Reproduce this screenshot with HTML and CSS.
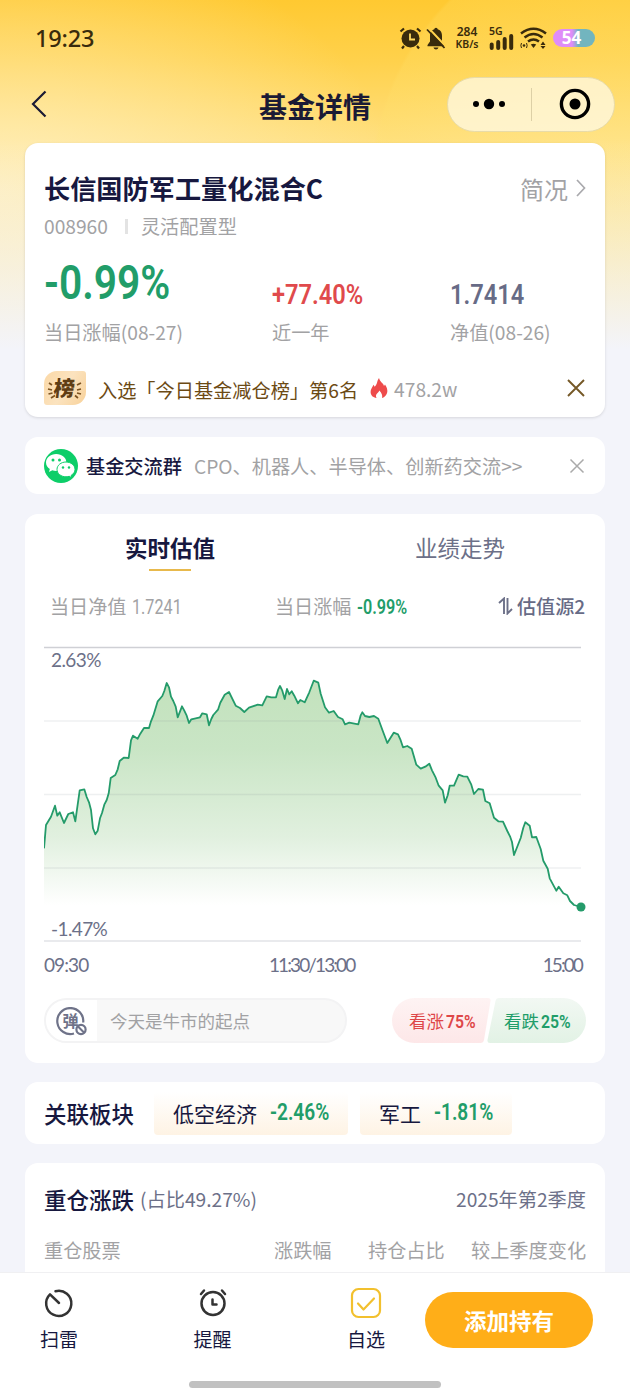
FILE: index.html
```html
<!DOCTYPE html>
<html lang="zh-CN">
<head>
    <meta charset="UTF-8">
    <meta name="viewport" content="width=device-width, initial-scale=1.0">
    <title>基金详情</title>
    <link rel="stylesheet" href="styles.css">
</head>
<body>
<div class="page">
    <!-- 状态栏 -->
    <div class="status">
        <span class="time">19:23</span>
        <div class="status-icons">
            <svg width="23" height="23" viewBox="0 0 23 23">
                <circle cx="11.5" cy="11.5" r="9" fill="#392b0c"/>
                <path d="M1.5 4.5L5 1.500M21.500 4.500L18 1.500M5 19l-2 2.500M18 19l2 2.500" stroke="#392b0c" stroke-width="2.200" fill="none"/>
                <path d="M11 6.500v6h5" stroke="#ffd95e" stroke-width="1.800" fill="none"/>
            </svg>
            <svg class="bell" width="20" height="23" viewBox="0 0 20 23">
                <path d="M10 .8c-1 0-1.600.8-1.700 1.500C5 3.300 4 6 4 9v5.500L1.500 18v1.300h17V18L16 14.500V9c0-3-1-5.700-4.300-6.700C11.600 1.600 11 .8 10 .8zM7.500 20.500h5c-.4 1.300-1.300 1.900-2.500 1.900s-2.100-.6-2.500-1.900z" fill="#392b0c"/>
                <path d="M2.500 1L19.500 19" stroke="#ffd24c" stroke-width="2"/>
                <path d="M1 2.500L18.500 21" stroke="#392b0c" stroke-width="1.800"/>
            </svg>
            <div class="speed"><span>284</span><span>KB/s</span></div>
            <div class="signal">
                <span>5G</span>
                <svg width="25" height="16" viewBox="0 0 25 16">
                    <path d="M2.700 10.500v3.500M9.200 8v6M15.700 5v9M22.200 2v12" stroke="#392b0c" stroke-width="4" stroke-linecap="round"/>
                </svg>
            </div>
            <svg class="wifi" width="27" height="22" viewBox="0 0 27 22">
                <g fill="none" stroke="#392b0c" stroke-width="2.500">
                    <path d="M1 6.500Q13.500-3 26 6.500"/>
                    <path d="M4.500 10.500Q13.500 3.500 22.500 10.500"/>
                    <path d="M8 14.500Q13.500 10.500 19 14.500"/>
                </g>
                <path d="M10.800 17.500Q13.500 16 16.200 17.500L13.500 21zM20.500 18l2.500-3.500 2.500 3.500zM20.500 19h5L23 22z" fill="#392b0c"/>
                <circle cx="4" cy="18.500" r="1.300" fill="#392b0c"/>
                <path d="M1.500 16q-1.300 2.500 0 5M6.500 16q1.300 2.500 0 5" stroke="#392b0c" stroke-width="1" fill="none"/>
            </svg>
            <span class="battery">54</span>
        </div>
    </div>

    <!-- 导航栏 -->
    <div class="nav">
        <svg class="back" width="16" height="28" viewBox="0 0 16 28">
            <path d="M14.500 1.500L2 14l12.500 12.500" fill="none" stroke="#1b1a35" stroke-width="2.200"/>
        </svg>
        <h1>基金详情</h1>
        <div class="capsule">
            <svg width="36" height="12" viewBox="0 0 36 12">
                <circle cx="5" cy="6" r="3"/><circle cx="18" cy="6" r="5.200"/><circle cx="31" cy="6" r="3"/>
            </svg>
            <i></i>
            <svg width="32" height="32" viewBox="0 0 32 32">
                <circle cx="16" cy="16" r="13.600" fill="none" stroke="#000" stroke-width="3.400"/><circle cx="16" cy="16" r="5.500"/>
            </svg>
        </div>
    </div>

    <!-- 基金概要 -->
    <div class="card fund">
        <div class="fund-title">
            <h2>长信国防军工量化混合C</h2>
            <a>简况
                <svg width="10" height="18" viewBox="0 0 10 18"><path d="M1 1l7.500 8L1 17" fill="none" stroke="#a9a9ad" stroke-width="1.700"/></svg>
            </a>
        </div>
        <div class="fund-code"><span>008960</span><i></i><span>灵活配置型</span></div>
        <div class="fund-data">
            <div><b class="num big green">-0.99%</b><span>当日涨幅(08-27)</span></div>
            <div><b class="num red">+77.40%</b><span>近一年</span></div>
            <div><b class="num gray">1.7414</b><span>净值(08-26)</span></div>
        </div>
        <div class="rank">
            <div class="rank-icon">
                <svg width="42" height="34" viewBox="0 0 42 34">
                    <path d="M4 18l4 1M4.500 23l4-1M7 27l4-2.500M5 12l3 2M37 18l-4 1M37 23l-4-1M34 27l-3-2.500M37 12l-4 2" stroke="#7c5220" stroke-width="1.700"/>
                </svg>
                <b>榜</b>
            </div>
            <span class="rank-text">入选「今日基金减仓榜」第6名</span>
            <svg class="fire" width="18" height="20" viewBox="0 0 18 20">
                <path d="M9 0c.8 4 4.500 5 5 8l1-1.500c1.800 2.500 2.600 5 2.300 7.500-.4 3-2.600 5.200-5.300 6 .8-2.800-.4-5-2.700-7.500-.4 2-2.500 2.600-3.100 4.300-.4 1.200-.2 2.300.4 3.200C3 19.500.7 17.500.6 14 .5 11 2.500 9 3.500 6.700l1.200 2C7.500 6.500 6.700 3 9 0z" fill="#ee4b4b"/>
            </svg>
            <span class="hot">478.2w</span>
            <svg class="close" width="20" height="20" viewBox="0 0 20 20"><path d="M2 2l16 16M18 2L2 18" stroke="#755827" stroke-width="1.900"/></svg>
        </div>
    </div>

    <!-- 交流群 -->
    <div class="card group">
        <svg width="34" height="34" viewBox="0 0 34 34">
            <circle cx="17" cy="17" r="17" fill="#0dce69"/>
            <path d="M12.200 5C6.500 5 2 8.800 2 13.500c0 2.700 1.500 5 3.800 6.600L5 23l3.300-1.700c1.200.4 2.500.6 3.900.6 5.700 0 10.200-3.800 10.200-8.500S17.900 5 12.200 5z" fill="#fff"/>
            <path d="M22 13c-5 0-9 3.300-9 7.400s4 7.400 9 7.400c1.100 0 2.200-.2 3.200-.5l2.700 1.400-.7-2.400c2.300-1.300 3.800-3.500 3.800-5.900 0-4.100-4-7.400-9-7.400z" fill="#fff" stroke="#0dce69"/>
            <g fill="#0dce69"><circle cx="9" cy="11" r="1.500"/><circle cx="15.500" cy="11" r="1.500"/><circle cx="19" cy="18.500" r="1.200"/><circle cx="25" cy="18.500" r="1.200"/></g>
        </svg>
        <b>基金交流群</b>
        <span>CPO、机器人、半导体、创新药交流&gt;&gt;</span>
        <svg class="close" width="16" height="16" viewBox="0 0 16 16"><path d="M1.500 1.500l13 13M14.500 1.500l-13 13" stroke="#aaa" stroke-width="1.500"/></svg>
    </div>

    <!-- 实时估值 -->
    <div class="card chart-card">
        <div class="tabs">
            <div class="tab active">实时估值</div>
            <div class="tab">业绩走势</div>
        </div>
        <div class="info">
            <div>当日净值 <b class="num light">1.7241</b></div>
            <div>当日涨幅 <b class="num green">-0.99%</b></div>
            <div class="source">
                <svg width="15" height="18" viewBox="0 0 15 18"><path d="M1 6L6 1.500V17M9.500 1v15.500L14 12" fill="none" stroke="#6c7088" stroke-width="1.900"/></svg>
                估值源2
            </div>
        </div>
        <div class="chart">
            <svg width="545" height="296" viewBox="0 -1 545 296">
                <defs>
                    <linearGradient id="area" x1="0" y1="34" x2="0" y2="258" gradientUnits="userSpaceOnUse">
                        <stop offset="0" stop-color="#c3e2bd"/>
                        <stop offset=".3" stop-color="#c9e5c5"/>
                        <stop offset=".7" stop-color="#e1f0df"/>
                        <stop offset="1" stop-color="#fff"/>
                    </linearGradient>
                </defs>
                <polygon fill="url(#area)" points="0,260 0,201 2,178 7,170 11,159 13.300,169 15.700,165 20,176 24.300,167 29,165 31.300,174 35.700,143 40.300,142 42.700,150 45,155 47,163 49,181 51.300,187 53.700,184 56,171 58,166 60.300,158 62.700,153 64.700,146 66.700,131 71.300,128 73.700,122 75.700,114 79.700,111 84.700,111 87,93 89,89 93.700,92 96.300,87 100,81 105,81 107,74 109.300,69 113.700,54 118.300,49 120.300,44 122.700,36 125,40 127,50 129.300,54 131.700,60 133.700,70 138,59 140.300,64 142.700,69 145,76 147.300,72 156,70 158.300,66 162.700,67 165,78 167.300,72 169.300,68 174,63 176.300,56 180.700,48 185,45 191.700,59 196,61 200.300,65 205,61 213.700,58 218.300,58 222.700,49 227.300,50 232,50 234.300,42 236,39 238.300,44 240.700,52 243,42 245.300,47 247.700,44 250.300,49 254,56 256.300,53 260.700,55 265.300,45 269.700,34 274.300,36 276.700,47 281,60 285,66 289.700,64 294,70 298.700,72 301,77 305.300,76 314.300,77 316.700,68 318.300,65 321,69 325.300,70 330,69 334.300,72 338.700,84 343.300,96 349.700,86 354,87 356.300,92 359,100 363.300,99 367.700,102 372.300,118 376.700,122 381.300,120 385.300,117 388,123 391.700,131 394.700,139 398.700,143 401,156 403.700,148 405.700,139 410,139 414.700,128 419.300,129 423.300,130 427.300,138 430,147 434.300,142 439,143 441.300,154 445.700,156 450,171 454.300,174 459,175 463.300,184 466,189 468,195 470,208 476.700,191 479.300,181 481.300,175 485.700,179 488,190 492.300,190 496.700,202 499.300,214 503.700,222 505.700,231 512.300,244 514.700,240 519.300,246 523.300,248 526,254 530,258 537,260"/>
                <g stroke="#7a8a96" stroke-opacity=".13" stroke-width="1.500">
                    <path d="M0 74h537M0 147.500h537M0 221h537"/>
                </g>
                <path d="M0 .5h537" stroke="#cfd0d5" stroke-width="1.700"/>
                <path d="M0 294h537" stroke="#e2e3e7" stroke-width="1.700"/>
                <polyline fill="none" stroke="#249b6a" stroke-width="1.800" stroke-linejoin="round" points="0,201.300 2,178 7,169.700 11,158.700 13.300,168.700 15.700,165.300 20,176 24.300,167 29,165.300 31.300,174.300 35.700,143.300 40.300,142.300 42.700,150 45,155.300 47,163 49,181.300 51.300,187.300 53.700,183.700 56,171.300 58,166 60.300,157.700 62.700,153 64.700,146.300 66.700,131 71.300,128 73.700,122.300 75.700,114 79.700,110.700 84.700,111 87,93.300 89,88.700 93.700,91.700 96.300,86.700 100,81 105,81 107,74.300 109.300,68.700 113.700,54.300 118.300,49 120.300,44 122.700,36 125,40.300 127,49.700 129.300,54 131.700,59.700 133.700,70.300 138,59.300 140.300,63.700 142.700,68.700 145,76 147.300,72.300 156,70.300 158.300,66.300 162.700,67.300 165,78.300 167.300,72 169.300,68 174,62.700 176.300,55.700 180.700,47.700 185,45 191.700,58.700 196,61 200.300,65 205,60.700 213.700,57.700 218.300,58.300 222.700,49.300 227.300,50.300 232,50.300 234.300,42.300 236,39 238.300,43.700 240.700,52 243,42 245.300,47.300 247.700,44.300 250.300,48.700 254,56.300 256.300,53 260.700,55.300 265.300,45.300 269.700,33.700 274.300,35.700 276.700,46.700 281,60.300 285,65.700 289.700,64 294,70 298.700,72.300 301,77.300 305.300,75.700 314.300,77.300 316.700,68.300 318.300,65.300 321,69 325.300,70 330,69 334.300,71.700 338.700,83.700 343.300,96 349.700,85.700 354,87.300 356.300,92.300 359,100.300 363.300,99 367.700,101.700 372.300,117.700 376.700,121.700 381.300,119.700 385.300,116.700 388,123.300 391.700,130.700 394.700,138.700 398.700,143.300 401,155.700 403.700,148.300 405.700,138.700 410,138.700 414.700,127.700 419.300,129.300 423.300,129.700 427.300,137.700 430,147 434.300,142 439,142.700 441.300,154 445.700,156.300 450,170.700 454.300,174.300 459,174.700 463.300,184 466,189.300 468,195 470,208 476.700,191 479.300,180.700 481.300,175.300 485.700,178.700 488,190.300 492.300,190 496.700,202 499.300,213.700 503.700,221.700 505.700,231.300 512.300,243.700 514.700,239.700 519.300,246.300 523.300,248.300 526,254 530,258 537,260"/>
                <circle cx="537" cy="260" r="4.500" fill="#249b6a"/>
            </svg>
            <span class="max">2.63%</span>
            <span class="min">-1.47%</span>
        </div>
        <div class="axis"><span>09:30</span><span class="narrow">11:30/13:00</span><span class="narrow">15:00</span></div>
        <div class="talk">
            <div class="danmu">
                <div class="danmu-icon">
                    <svg width="31" height="29" viewBox="0 0 31 29">
                        <path d="M27.200 15.500A13 13 0 1 0 18 26.500" fill="none" stroke="#6f7389" stroke-width="2.200"/>
                        <circle cx="25" cy="22.500" r="4.600" fill="none" stroke="#6f7389" stroke-width="2.200"/>
                        <path d="M21.800 19.300l6.400 6.400" stroke="#6f7389" stroke-width="2"/>
                        <text class="danmu-char" x="6.500" y="19.500">弹</text>
                    </svg>
                </div>
                <span>今天是牛市的起点</span>
            </div>
            <div class="vote">
                <svg width="194" height="45" viewBox="0 0 194 45">
                    <defs>
                        <linearGradient id="up" x1="0" y1="0" x2="0" y2="1"><stop offset="0" stop-color="#fef3f3"/><stop offset="1" stop-color="#fde7e8"/></linearGradient>
                        <linearGradient id="down" x1="0" y1="0" x2="0" y2="1"><stop offset="0" stop-color="#f2f8f3"/><stop offset="1" stop-color="#e2f2e5"/></linearGradient>
                    </defs>
                    <path d="M22.500 0H96q3 0 2.500 3L92 42q-.6 3-3.500 3h-66a22.500 22.500 0 0 1 0-45z" fill="url(#up)"/>
                    <path d="M107 0h64.500a22.500 22.500 0 0 1 0 45H98q-3 0-2.500-3l8-39q.6-3 3.500-3z" fill="url(#down)"/>
                </svg>
                <span class="up">看涨<b class="num">75%</b></span>
                <span class="down">看跌<b class="num">25%</b></span>
            </div>
        </div>
    </div>

    <!-- 关联板块 -->
    <div class="card sector">
        <h3>关联板块</h3>
        <div class="tag tag1"><span>低空经济</span><b class="num green">-2.46%</b></div>
        <div class="tag tag2"><span>军工</span><b class="num green">-1.81%</b></div>
    </div>

    <!-- 重仓 -->
    <div class="card hold">
        <div class="hold-title">
            <h3>重仓涨跌</h3><span>(占比49.27%)</span><span class="season">2025年第2季度</span>
        </div>
        <div class="hold-head"><span>重仓股票</span><span>涨跌幅</span><span>持仓占比</span><span>较上季度变化</span></div>
    </div>

    <!-- 底部 -->
    <div class="footer">
        <div class="menu">
            <div class="menu-item">
                <svg width="32" height="32" viewBox="0 0 32 32"><path d="M12.500 4.200A12.600 12.600 0 1 1 7 7.300L16 16" fill="none" stroke="#333" stroke-width="2.500" stroke-linecap="round" stroke-linejoin="round"/></svg>
                <span>扫雷</span>
            </div>
            <div class="menu-item">
                <svg width="32" height="32" viewBox="0 0 32 32" fill="none" stroke="#333" stroke-width="2.500" stroke-linecap="round" stroke-linejoin="round"><circle cx="17" cy="16.500" r="11.500"/><path d="M16.500 12.500v5h4M5 7l3-3.500M29 7l-3-3.500"/></svg>
                <span>提醒</span>
            </div>
            <div class="menu-item">
                <svg width="32" height="32" viewBox="0 0 32 32" fill="none" stroke="#f2c02e" stroke-width="2.200" stroke-linecap="round" stroke-linejoin="round"><rect x="2" y="2" width="28" height="28" rx="6.500"/><path d="M8 16.500l5.500 6L24 11.500"/></svg>
                <span>自选</span>
            </div>
        </div>
        <button class="add">添加持有</button>
        <div class="homebar"></div>
    </div>
</div>
</body>
</html>
```
FILE: styles.css
```css
*{
    margin: 0;
    padding: 0;
    box-sizing: border-box;
}
body{
    width: 630px;
    height: 1400px;
    overflow: hidden;
    font-family: "Noto Sans CJK SC", sans-serif;
    color: #17183f;
    background: #f3f4fa;
}
svg{
    display: block;
    flex-shrink: 0;
}
span,b,a,h1,h2,h3{
    white-space: nowrap;
}
.page{
    height: 1400px;
    display: flex;
    flex-direction: column;
    /* 顶部黄色渐变 */
    background:
        linear-gradient(to bottom, rgba(243,244,250,0) 140px, #f3f4fa 350px),
        radial-gradient(circle at 640px 190px, rgba(255,238,160,.3) 0, rgba(255,226,110,.22) 267px, rgba(255,226,110,0) 270px),
        radial-gradient(ellipse 400px 260px at 0 190px, rgba(255,243,205,.7) 0, rgba(255,243,205,0) 100%),
        linear-gradient(to bottom, #ffc931 0, #ffd14b 60px, #ffe081 145px, #ffe38a 240px, #ffe79c 350px);
    background-color: #f3f4fa;
}
/* 数字字体 */
.num{
    display: inline-block;
    font-family: Roboto, sans-serif;
    font-weight: 600;
    transform: scaleX(.83);
    transform-origin: left center;
}
.green{ color: #219d69; }
.red{ color: #e04a4c; }
.gray{ color: #676b86; }

.status{
    height: 76px;
    flex-shrink: 0;
    padding: 0 35px;
    display: flex;
    align-items: center;
    justify-content: space-between;
    color: #392b0c;
    font-family: "Noto Sans", sans-serif;
}
.time{
    font-size: 23.5px;
    font-weight: 500;
    letter-spacing: -.2px;
}
.status-icons{
    display: flex;
    align-items: center;
}
.bell{ margin-left: 4px; }
.speed{
    width: 26px;
    margin-left: 8px;
    display: flex;
    flex-direction: column;
    align-items: center;
    font-size: 12px;
    line-height: 12px;
    font-weight: 600;
}
.speed span:last-child{
    font-size: 10.5px;
    line-height: 13px;
}
.signal{
    margin-left: 9px;
    display: flex;
    flex-direction: column;
    font-size: 10.5px;
    line-height: 9px;
    font-weight: 600;
}
.signal svg{ margin-top: -2px; }
.wifi{ margin-left: 6px; }
.battery{
    width: 42px;
    height: 18px;
    margin-left: 6px;
    padding-right: 5px;
    border-radius: 9px;
    background: linear-gradient(to right, #df8cf8 0, #df8cf8 45%, #72b5bf 60%);
    color: #fff;
    font-size: 17px;
    line-height: 18px;
    font-weight: 700;
    text-align: center;
}

.nav{
    height: 67px;
    flex-shrink: 0;
    display: grid;
    grid-template-columns: 183px 1fr 183px;
    align-items: center;
    padding-bottom: 11px;
}
.back{ margin-left: 31px; }
.nav h1{
    font-size: 28px;
    line-height: 40px;
    font-weight: 700;
    text-align: center;
    color: #1b1a35;
    padding-top: 3px;
}
.capsule{
    width: 168px;
    height: 55px;
    border: 1px solid #e8dba8;
    border-radius: 28px;
    background: rgba(255,250,230,.75);
    display: flex;
    align-items: center;
    padding: 0 23px;
}
.capsule i{
    width: 1px;
    height: 33px;
    margin: 0 27px 0 24px;
    background: #ddd0a6;
}

.card{
    width: 580.5px;
    margin: 0 auto 19px 24.5px;
    padding: 0 19px 0 19.5px;
    border-radius: 13px;
    background: #fff;
    flex-shrink: 0;
}
.fund{
    height: 274px;
    padding-top: 22px;
    box-shadow: 0 1px 3px rgba(0,0,0,.12);
    margin-bottom: 20px;
}
.fund-title{
    height: 46px;
    display: flex;
    align-items: center;
    justify-content: space-between;
}
.fund-title h2{
    font-size: 26.2px;
    font-weight: 700;
}
.fund-title a{
    display: flex;
    align-items: center;
    gap: 8px;
    font-size: 24px;
    color: #a2a2a5;
}
.fund-code{
    height: 30px;
    display: flex;
    align-items: center;
    font-size: 19.2px;
    color: #a2a2a4;
}
.fund-code i{
    width: 3px;
    height: 15px;
    margin: 0 13px 0 17px;
    background: #e3e3e3;
}
.fund-data{
    height: 112px;
    display: grid;
    grid-template-columns: 228px 178px 1fr;
}
.fund-data div{
    display: flex;
    flex-direction: column;
    justify-content: flex-end;
}
.fund-data span{
    font-size: 19.2px;
    line-height: 28px;
    margin-bottom: 7px;
    color: #a2a2a4;
}
.fund-data .num{
    font-size: 28.5px;
    line-height: 34px;
    margin-bottom: 6px;
}
.fund-data .big{
    font-size: 49px;
    line-height: 56px;
    margin-bottom: 7px;
}
.rank{
    height: 52px;
    margin-top: 9px;
    display: flex;
    align-items: center;
    font-size: 19.2px;
}
.rank-icon{
    width: 42px;
    height: 34px;
    border-radius: 13px 3px 13px 3px;
    background: linear-gradient(120deg, #fbd8a6, #fbe3bf 50%, #f8d199);
    position: relative;
}
.rank-icon b{
    position: absolute;
    left: 10px;
    top: 4px;
    font-size: 21px;
    line-height: 25px;
    font-weight: 900;
    color: #5f3d14;
    transform: skewX(-6deg);
}
.rank-text{
    margin-left: 12px;
    padding-top: 3px;
    color: #6c4a14;
}
.fire{ margin-left: 12px; }
.hot{
    margin-left: 6px;
    padding-top: 1px;
    color: #a2a2a4;
}
.close{ margin-left: auto; }

.group{
    height: 57px;
    display: flex;
    align-items: center;
    font-size: 19.2px;
    margin-bottom: 20px;
}
.group b{
    margin-left: 8px;
    font-weight: 500;
}
.group span{
    margin-left: 12px;
    color: #a2a2a4;
}
.group .close{ margin-right: 1px; }

.chart-card{
    height: 549px;
}
.tabs{
    height: 66px;
    display: grid;
    grid-template-columns: 252px 1fr;
    padding-top: 13px;
}
.tab{
    display: flex;
    flex-direction: column;
    align-items: center;
    font-size: 22.5px;
    line-height: 40px;
    color: #6c7088;
    padding-left: 38px;
}
.tab.active{
    padding-left: 0;
    font-weight: 700;
    color: #17183f;
}
.tab.active::after{
    content: "";
    width: 42px;
    height: 2px;
    margin-top: 2px;
    background: #e8b94c;
}
.info{
    height: 56px;
    padding-left: 6px;
    padding-bottom: 5px;
    display: grid;
    grid-template-columns: 225px 222px 1fr;
    align-items: center;
    font-size: 19.1px;
    color: #a2a2a4;
    white-space: nowrap;
}
.info .num{
    font-size: 19.500px;
    margin-left: 1px;
}
.info .light{ font-weight: 400; }
.source{
    display: flex;
    align-items: center;
    gap: 4px;
    margin-left: 1px;
    font-weight: 500;
    color: #676b86;
}
.chart{
    height: 296px;
    margin-top: 10px;
    position: relative;
    font-family: Lato, sans-serif;
    font-size: 19px;
    color: #6c7088;
}
.max,.min{
    position: absolute;
    left: 7px;
    line-height: 24px;
    letter-spacing: -.6px;
}
.max{ top: 2px; }
.min{ bottom: 1px; }
.axis{
    height: 44px;
    margin-right: 4px;
    display: grid;
    grid-template-columns: 225px 1fr auto;
    align-items: center;
    font-family: Lato, sans-serif;
    font-size: 19px;
    letter-spacing: -.9px;
    color: #6c7088;
}
.narrow{ letter-spacing: -1.900px; }
.talk{
    height: 45px;
    margin-top: 12px;
    display: flex;
    justify-content: space-between;
}
.danmu{
    width: 303px;
    height: 45px;
    border: 2px solid #f3f3f4;
    border-radius: 23px;
    background: #f8f8f8;
    overflow: hidden;
    display: flex;
    align-items: center;
    font-size: 17.500px;
    color: #a2a2a4;
}
.danmu-icon{
    width: 51px;
    height: 41px;
    padding: 7px 0 0 10px;
    margin-right: 13px;
    background: #fff;
}
.danmu-char{
    font-size: 16px;
    font-weight: 700;
    fill: #6f7389;
}
.vote{
    position: relative;
    font-size: 17.500px;
}
.vote span{
    position: absolute;
    top: 0;
    line-height: 45px;
}
.vote .num{
    font-size: 19px;
    margin-left: 2px;
}
.vote .up{ left: 17px; color: #de4648; }
.vote .down{ left: 112px; color: #219d69; }

.sector{
    height: 62px;
    display: flex;
    align-items: center;
}
.sector h3,.hold h3{
    font-size: 22.500px;
    font-weight: 500;
}
.tag{
    height: 43px;
    margin-top: 1px;
    border-radius: 4px;
    background: linear-gradient(to bottom, #fff 0, #fef3e4 100%);
    display: flex;
    align-items: center;
    font-size: 21px;
    line-height: 40px;
    padding: 0 0 2px 19px;
}
.tag1{ width: 194px; margin-left: 20px; }
.tag2{ width: 152px; margin-left: 12px; }
.tag .num{
    font-size: 23px;
    margin-left: 13px;
}

.hold{
    height: 237px;
    padding-top: 16px;
}
.hold-title{
    height: 40px;
    display: flex;
    align-items: center;
    font-size: 19.200px;
    font-weight: 400;
    color: #6c7088;
}
.hold-title h3{
    color: #17183f;
    margin-right: 6px;
}
.season{ margin-left: auto; }
.hold-head{
    height: 62px;
    display: grid;
    grid-template-columns: 230px 94px 103px 1fr;
    align-items: center;
    font-size: 19.200px;
    color: #a2a2a4;
}

.footer{
    position: fixed;
    left: 0;
    top: 1272px;
    width: 630px;
    height: 128px;
    border-top: 1px solid #f0f0f2;
    background: #fff;
    display: grid;
    grid-template-columns: 425px 168px;
    grid-template-rows: 108px 8px;
}
.menu{
    display: flex;
    justify-content: space-between;
    padding: 14px 40px 0 40px;
}
.menu-item{
    display: flex;
    flex-direction: column;
    align-items: center;
    font-size: 19px;
    line-height: 28px;
}
.menu-item span{ margin-top: 6px; }
.add{
    height: 56px;
    margin-top: 19px;
    border: none;
    border-radius: 28px;
    background: #ffae18;
    color: #fff;
    font-family: inherit;
    font-size: 22.500px;
    font-weight: 700;
}
.homebar{
    grid-column: 1 / 3;
    width: 252px;
    height: 7px;
    margin-left: 189px;
    border-radius: 4px;
    background: #c1c1c1;
}
```
